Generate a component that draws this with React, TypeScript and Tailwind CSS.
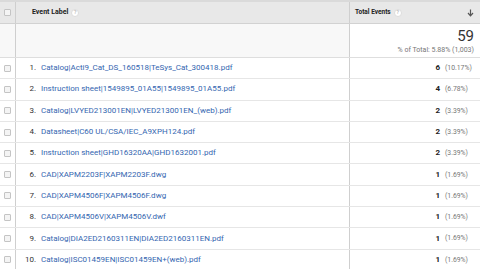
import React from "react";

const rows = [
  { label: "Catalog|Acti9_Cat_DS_160518|TeSys_Cat_300418.pdf", n: "6", pct: "(10.17%)" },
  { label: "Instruction sheet|1549895_01A55|1549895_01A55.pdf", n: "4", pct: "(6.78%)" },
  { label: "Catalog|LVYED213001EN|LVYED213001EN_(web).pdf", n: "2", pct: "(3.39%)" },
  { label: "Datasheet|C60 UL/CSA/IEC_A9XPH124.pdf", n: "2", pct: "(3.39%)" },
  { label: "Instruction sheet|GHD16320AA|GHD1632001.pdf", n: "2", pct: "(3.39%)" },
  { label: "CAD|XAPM2203F|XAPM2203F.dwg", n: "1", pct: "(1.69%)" },
  { label: "CAD|XAPM4506F|XAPM4506F.dwg", n: "1", pct: "(1.69%)" },
  { label: "CAD|XAPM4506V|XAPM4506V.dwf", n: "1", pct: "(1.69%)" },
  { label: "Catalog|DIA2ED2160311EN|DIA2ED2160311EN.pdf", n: "1", pct: "(1.69%)" },
  { label: "Catalog|ISC01459EN|ISC01459EN+(web).pdf", n: "1", pct: "(1.69%)" },
];

function Box() {
  return <div className="w-[7px] h-[7px] border border-[#c4c4c4] bg-[#f4f4f4] rounded-[1px]" />;
}

function Help() {
  return (
    <span className="inline-flex items-center justify-center w-[8px] h-[8px] rounded-full bg-white border border-[#dcdcdc] text-[5px] text-[#bbb] ml-[3px]">
      ?
    </span>
  );
}

export default function App() {
  return (
    <div className="w-[480px] h-[269px] overflow-hidden bg-white font-['Roboto',sans-serif] text-[#222]">
      <div className="border-t-2 border-[#dadada]">
        {/* header */}
        <div className="flex h-[22px] bg-[#e8e8e8] border-b border-[#d2d2d2]">
          <div className="w-[16px] shrink-0 flex items-center justify-center border-r border-[#cfcfcf]">
            <Box />
          </div>
          <div className="flex-1 flex items-center pl-[16px] text-[7px] font-bold text-[#222]">
            Event Label
            <Help />
          </div>
          <div className="w-[131px] shrink-0 flex items-center justify-between pl-[5px] pr-[6px] border-l border-[#cfcfcf] text-[6.5px] font-bold">
            <span className="flex items-center">
              Total Events
              <Help />
            </span>
            <svg width="7" height="8" viewBox="0 0 7 8">
              <path d="M3.5 0.5v6M1 4l2.5 2.8L6 4" stroke="#555" strokeWidth="1.2" fill="none" />
            </svg>
          </div>
        </div>
        {/* summary */}
        <div className="flex h-[34px] border-b border-[#dedede]">
          <div className="w-[16px] shrink-0 bg-[#f8f8f8] border-r border-[#cfcfcf]" />
          <div className="flex-1 bg-[#f8f8f8]" />
          <div className="w-[131px] shrink-0 border-l border-[#cfcfcf] flex flex-col items-end pr-[6px] pt-[4px]">
            <div className="text-[15px] leading-[16px] text-[#333]">59</div>
            <div className="text-[7px] leading-[8px] mt-[2px] text-[#777]">% of Total: 5.88% (1,003)</div>
          </div>
        </div>
        {/* rows */}
        {rows.map((r, i) => (
          <div key={i} className="flex h-[21.3px] border-b border-[#e6e6e6]">
            <div className="w-[16px] shrink-0 flex items-center justify-center border-r border-[#cfcfcf]">
              <Box />
            </div>
            <div className="flex-1 flex items-center text-[8px]">
              <span className="w-[25px] text-right pr-[5px] text-[#333]">{i + 1}.</span>
              <span className="text-[#3466b0]">{r.label}</span>
            </div>
            <div className="w-[131px] shrink-0 border-l border-[#cfcfcf] flex items-center justify-end pr-[5px]">
              <span className="text-[8px] font-bold text-[#222]">{r.n}</span>
              <span className="text-[6.8px] text-[#777] ml-[5px] w-[30px]">{r.pct}</span>
            </div>
          </div>
        ))}
      </div>
    </div>
  );
}
